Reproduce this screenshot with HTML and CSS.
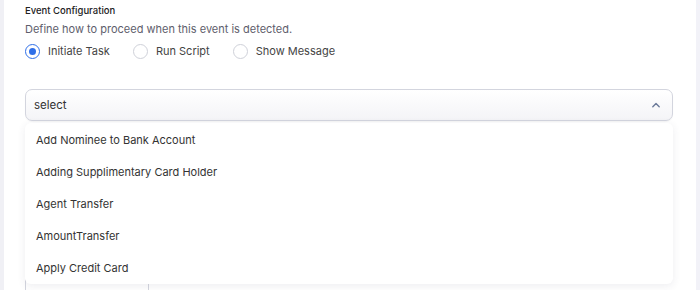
FILE: index.html
```html
<!DOCTYPE html>
<html>
<head>
<meta charset="utf-8">
<link rel="stylesheet" href="styles.css">
</head>
<body>
<div class="page">
  <div class="side-left"></div>
  <main class="content">
    <div class="title">Event Configuration</div>
    <div class="desc">Define how to proceed when this event is detected.</div>
    <div class="radios">
      <label class="radio"><span class="dot checked"></span>Initiate Task</label>
      <label class="radio"><span class="dot"></span>Run Script</label>
      <label class="radio"><span class="dot"></span>Show Message</label>
    </div>
    <div class="select-wrap">
      <div class="select">
        <span class="placeholder">select</span>
        <svg class="chev" width="10" height="6" viewBox="0 0 10 6"><path d="M1.8 4.8 L5 1.6 L8.2 4.8" fill="none" stroke="#6b7a99" stroke-width="1.4" stroke-linecap="round" stroke-linejoin="round"/></svg>
      </div>
      <div class="under"></div>
      <ul class="menu">
        <li>Add Nominee to Bank Account</li>
        <li>Adding Supplimentary Card Holder</li>
        <li>Agent Transfer</li>
        <li>AmountTransfer</li>
        <li>Apply Credit Card</li>
      </ul>
    </div>
  </main>
  <div class="side-right"></div>
</div>
</body>
</html>
```
FILE: styles.css
```css
html, body {
  margin: 0;
  padding: 0;
  background: #ffffff;
  font-family: Inter, "Noto Sans", sans-serif;
  color: #333;
}
.page {
  display: flex;
  width: 700px;
  height: 290px;
  overflow: hidden;
}
.side-left {
  width: 4px;
  background: #f0f0f5;
  flex: none;
}
.side-right {
  width: 4px;
  background: #f2f2f8;
  flex: none;
}
.content {
  flex: 1;
  padding: 5px 23px 0 21px;
}
.title {
  font-size: 9.5px;
  line-height: 12px;
  color: #222;
  font-weight: 500;
}
.desc {
  margin-top: 5px;
  font-size: 11px;
  line-height: 14px;
  color: #5e5e6c;
}
.radios {
  display: flex;
  gap: 23px;
  margin-top: 7px;
  height: 16px;
  align-items: center;
}
.radio {
  display: flex;
  align-items: center;
  gap: 8px;
  font-size: 11px;
  color: #444;
}
.dot {
  width: 15px;
  height: 15px;
  border-radius: 50%;
  border: 1px solid #cfd1d9;
  box-sizing: border-box;
  position: relative;
  flex: none;
}
.dot.checked {
  border: 1.5px solid #2f6fe8;
}
.dot.checked::after {
  content: "";
  position: absolute;
  left: 50%;
  top: 50%;
  width: 7px;
  height: 7px;
  margin: -3.5px 0 0 -3.5px;
  border-radius: 50%;
  background: #2f6fe8;
}
.select-wrap {
  position: relative;
  margin-top: 30px;
}
.select {
  height: 32px;
  box-sizing: border-box;
  border: 1px solid #d3d5de;
  border-radius: 7px;
  background: linear-gradient(#ffffff, #f4f4f7);
  display: flex;
  align-items: center;
  justify-content: space-between;
  padding: 0 11px 0 8px;
  box-shadow: 0 1px 1px rgba(0,0,0,0.04);
}
.placeholder {
  font-size: 11.5px;
  color: #333;
}
.under {
  margin-top: 156px;
  width: 124px;
  height: 20px;
  border: 1px solid #d3d5de;
  border-radius: 4px;
  box-sizing: border-box;
}
.menu {
  position: absolute;
  top: 34px;
  left: 0;
  right: 0;
  margin: 0;
  padding: 0;
  list-style: none;
  background: #fff;
  border-radius: 6px;
  box-shadow: 0 2px 8px rgba(60, 60, 90, 0.09);
  height: 161px;
}
.menu li {
  height: 32px;
  line-height: 32px;
  padding-left: 11px;
  font-size: 11px;
  color: #333;
}
.menu li:first-child {
  margin-top: 1px;
}
```
